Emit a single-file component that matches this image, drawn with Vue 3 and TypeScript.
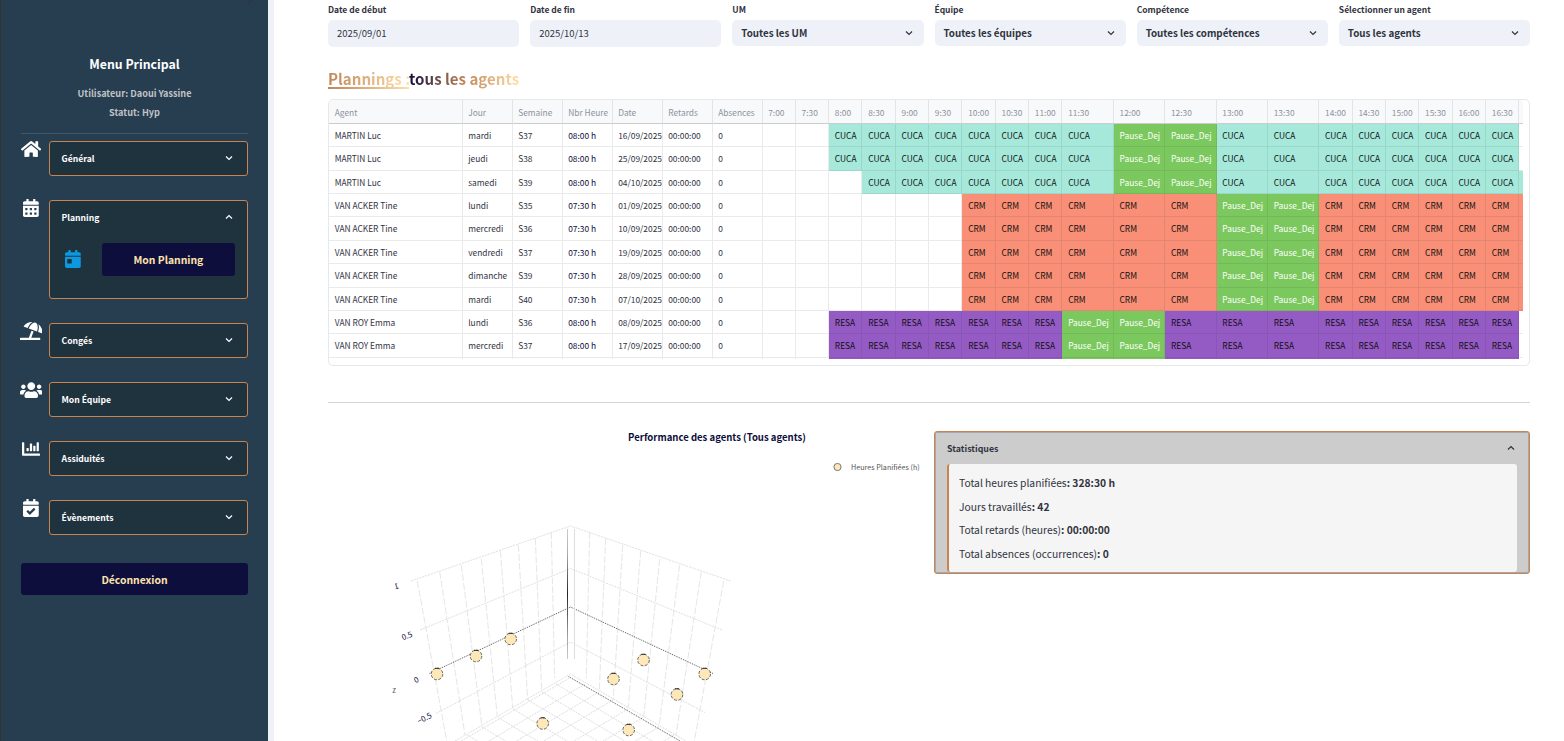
<script setup lang="ts">
interface MenuEntry {
  label: string
  icon: string
  viewBox: string
  open?: boolean
}

interface PlanRow {
  agent: string
  day: string
  week: string
  hours: string
  date: string
  slots: string[]
}

const calendarTop =
  'M436 160H12c-6.6 0-12-5.4-12-12v-36c0-26.5 21.5-48 48-48h48V12c0-6.6 5.4-12 12-12h40c6.6 0 12 5.4 12 12v52h128V12c0-6.6 5.4-12 12-12h40c6.6 0 12 5.4 12 12v52h48c26.5 0 48 21.5 48 48v36c0 6.6-5.4 12-12 12z'
const hole = (x: number, y: number): string =>
  `M${x} ${y + 12}c0-6.6 5.4-12 12-12h40c6.6 0 12 5.4 12 12v40c0 6.6-5.4 12-12 12h-40c-6.6 0-12-5.4-12-12z`
const calendarBody = 'M0 192h448v272c0 26.5-21.5 48-48 48H48c-26.5 0-48-21.5-48-48z'
const calendarGrid =
  calendarTop + calendarBody + [64, 192, 320].map((x) => hole(x, 256) + hole(x, 384)).join('')
const calendarDay = calendarTop + calendarBody + 'M64 272v96c0 8.8 7.2 16 16 16h96c8.8 0 16-7.2 16-16v-96c0-8.8-7.2-16-16-16H80c-8.8 0-16 7.2-16 16z'

const menu: MenuEntry[] = [
  {
    label: 'Général',
    viewBox: '0 0 576 512',
    icon: 'M280.37 148.26L96 300.11V464a16 16 0 0 0 16 16l112.06-.29a16 16 0 0 0 15.92-16V368a16 16 0 0 1 16-16h64a16 16 0 0 1 16 16v95.64a16 16 0 0 0 16 16.05L464 480a16 16 0 0 0 16-16V300L295.67 148.26a12.19 12.19 0 0 0-15.3 0zM571.6 251.47L488 182.56V44.05a12 12 0 0 0-12-12h-56a12 12 0 0 0-12 12v72.61L318.47 43a48 48 0 0 0-61 0L4.34 251.47a12 12 0 0 0-1.6 16.9l25.5 31A12 12 0 0 0 45.15 301l235.22-193.74a12.19 12.19 0 0 1 15.3 0L530.9 301a12 12 0 0 0 16.9-1.6l25.5-31a12 12 0 0 0-1.7-16.93z',
  },
  { label: 'Planning', viewBox: '0 0 448 512', icon: calendarGrid, open: true },
  {
    label: 'Congés',
    viewBox: '0 0 640 512',
    icon: 'M115.38 136.9l102.11 37.18c35.19-81.54 86.21-144.29 139-173.7-95.88-4.89-188.78 36.96-248.53 111.8-6.69 8.4-2.66 21.05 7.42 24.72zm132.25 48.16l238.48 86.83c35.76-121.38 18.7-231.66-42.63-253.98-7.4-2.7-15.13-4-23.09-4-58.02.01-128.27 69.17-172.76 171.15zM521.48 60.5c6.22 16.3 10.83 34.6 13.2 55.19 5.74 49.89-1.42 108.23-18.95 166.98l102.62 37.36c10.09 3.67 21.31-3.43 21.57-14.17 2.32-95.69-41.91-187.44-118.44-245.36zM560 447.98H321.06L386 269.5l-60.14-21.9-72.9 200.37H16c-8.84 0-16 7.16-16 16.01v32.01C0 504.83 7.16 512 16 512h544c8.84 0 16-7.16 16-16.01v-32.01c0-8.84-7.16-16-16-16z',
  },
  {
    label: 'Mon Équipe',
    viewBox: '0 0 640 512',
    icon: 'M96 224c35.3 0 64-28.7 64-64s-28.7-64-64-64-64 28.7-64 64 28.7 64 64 64zm448 0c35.3 0 64-28.7 64-64s-28.7-64-64-64-64 28.7-64 64 28.7 64 64 64zm32 32h-64c-17.6 0-33.5 7.1-45.1 18.6 40.3 22.1 68.9 62 75.1 109.4h66c17.7 0 32-14.3 32-32v-32c0-35.3-28.7-64-64-64zm-256 0c61.9 0 112-50.1 112-112S381.9 32 320 32 208 82.1 208 144s50.1 112 112 112zm76.8 32h-8.3c-20.8 10-43.9 16-68.5 16s-47.6-6-68.5-16h-8.3C179.6 288 128 339.6 128 403.2V432c0 26.5 21.5 48 48 48h288c26.5 0 48-21.5 48-48v-28.8c0-63.6-51.6-115.2-115.2-115.2zm-223.7-13.4C161.5 263.1 145.6 256 128 256H64c-35.3 0-64 28.7-64 64v32c0 17.7 14.3 32 32 32h65.9c6.3-47.4 34.9-87.3 75.2-109.4z',
  },
  {
    label: 'Assiduités',
    viewBox: '0 0 512 512',
    icon: 'M332.8 320h38.4c6.4 0 12.8-6.4 12.8-12.8V172.8c0-6.4-6.4-12.8-12.8-12.8h-38.4c-6.4 0-12.8 6.4-12.8 12.8v134.4c0 6.4 6.4 12.8 12.8 12.8zm96 0h38.4c6.4 0 12.8-6.4 12.8-12.8V76.8c0-6.4-6.4-12.8-12.8-12.8h-38.4c-6.4 0-12.8 6.4-12.8 12.8v230.4c0 6.4 6.4 12.8 12.8 12.8zm-288 0h38.4c6.4 0 12.8-6.4 12.8-12.8v-70.4c0-6.4-6.4-12.8-12.8-12.8h-38.4c-6.4 0-12.8 6.4-12.8 12.8v70.4c0 6.4 6.4 12.8 12.8 12.8zm96 0h38.4c6.4 0 12.8-6.4 12.8-12.8V108.8c0-6.4-6.4-12.8-12.8-12.8h-38.4c-6.4 0-12.8 6.4-12.8 12.8v198.4c0 6.4 6.4 12.8 12.8 12.8zM496 384H64V80c0-8.84-7.16-16-16-16H16C7.16 64 0 71.16 0 80v336c0 17.67 14.33 32 32 32h464c8.84 0 16-7.16 16-16v-32c0-8.84-7.16-16-16-16z',
  },
  {
    label: 'Évènements',
    viewBox: '0 0 448 512',
    icon: calendarTop + 'M12 192h424c6.6 0 12 5.4 12 12v260c0 26.5-21.5 48-48 48H48c-26.5 0-48-21.5-48-48V204c0-6.6 5.4-12 12-12zm333.296 95.947l-28.169-28.398c-4.667-4.705-12.265-4.736-16.97-.068L194.12 364.665l-45.98-46.352c-4.667-4.705-12.266-4.736-16.971-.068l-28.397 28.17c-4.705 4.667-4.736 12.265-.068 16.97l82.601 83.269c4.667 4.705 12.265 4.736 16.97.068l142.953-141.805c4.705-4.667 4.736-12.265.068-16.97z',
  },
]

const filters = [
  { label: 'Date de début', value: '2025/09/01', date: true },
  { label: 'Date de fin', value: '2025/10/13', date: true },
  { label: 'UM', value: 'Toutes les UM' },
  { label: 'Équipe', value: 'Toutes les équipes' },
  { label: 'Compétence', value: 'Toutes les compétences' },
  { label: 'Sélectionner un agent', value: 'Tous les agents' },
]

const headers = [
  'Agent', 'Jour', 'Semaine', 'Nbr Heure', 'Date', 'Retards', 'Absences',
  '7:00', '7:30', '8:00', '8:30', '9:00', '9:30', '10:00', '10:30', '11:00', '11:30', '12:00',
  '12:30', '13:00', '13:30', '14:00', '14:30', '15:00', '15:30', '16:00', '16:30', '',
]

// Half-hour slots from 7:00; the 21st is the partly visible 17:00 column.
function slots(code: string, from: number, pause: number, to: number): string[] {
  return Array.from({ length: 21 }, (_, i) => {
    if (i < from || i >= to) return ''
    return i === pause || i === pause + 1 ? 'Pause_Dej' : code
  })
}

const rows: PlanRow[] = [
  { agent: 'MARTIN Luc', day: 'mardi', week: 'S37', hours: '08:00 h', date: '16/09/2025', slots: slots('CUCA', 2, 10, 20) },
  { agent: 'MARTIN Luc', day: 'jeudi', week: 'S38', hours: '08:00 h', date: '25/09/2025', slots: slots('CUCA', 2, 10, 20) },
  { agent: 'MARTIN Luc', day: 'samedi', week: 'S39', hours: '08:00 h', date: '04/10/2025', slots: slots('CUCA', 3, 10, 21) },
  { agent: 'VAN ACKER Tine', day: 'lundi', week: 'S35', hours: '07:30 h', date: '01/09/2025', slots: slots('CRM', 6, 12, 21) },
  { agent: 'VAN ACKER Tine', day: 'mercredi', week: 'S36', hours: '07:30 h', date: '10/09/2025', slots: slots('CRM', 6, 12, 21) },
  { agent: 'VAN ACKER Tine', day: 'vendredi', week: 'S37', hours: '07:30 h', date: '19/09/2025', slots: slots('CRM', 6, 12, 21) },
  { agent: 'VAN ACKER Tine', day: 'dimanche', week: 'S39', hours: '07:30 h', date: '28/09/2025', slots: slots('CRM', 6, 12, 21) },
  { agent: 'VAN ACKER Tine', day: 'mardi', week: 'S40', hours: '07:30 h', date: '07/10/2025', slots: slots('CRM', 6, 12, 21) },
  { agent: 'VAN ROY Emma', day: 'lundi', week: 'S36', hours: '08:00 h', date: '08/09/2025', slots: slots('RESA', 2, 9, 20) },
  { agent: 'VAN ROY Emma', day: 'mercredi', week: 'S37', hours: '08:00 h', date: '17/09/2025', slots: slots('RESA', 2, 9, 20) },
]

const stats = [
  { label: 'Total heures planifiées', value: '328:30 h' },
  { label: 'Jours travaillés', value: '42' },
  { label: 'Total retards (heures)', value: '00:00:00' },
  { label: 'Total absences (occurrences)', value: '0' },
]

// One wall of the 3D scene; the other is its mirror about x = 570.5.
const wallLines = [
  [417.3, 581, 446.7, 741], [439.7, 571.7, 465, 735], [461.3, 565, 482, 726.7],
  [481.3, 559, 497.3, 716.7], [500.3, 550.7, 512.7, 707.7], [518.3, 545, 527.7, 700],
  [535.3, 538.3, 541.7, 690.7], [551.3, 532.3, 554.7, 678.3],
]
const floorStarts = [[451, 743], [467, 735], [482, 727], [498, 717.5], [513, 709], [528, 700], [542, 692], [556, 684]]
const markers = [
  [437, 674], [476, 656], [510.7, 639], [542.7, 723.5], [643.5, 660],
  [613.5, 679], [677, 694.5], [704.7, 674], [628.7, 730],
]
const mirror = (x: number): number => 1141 - x
</script>

<template>
  <div class="app">
    <aside class="sidebar">
      <svg class="collapse" width="8" height="5" viewBox="0 0 8 5"><path d="M1 4 5 0" /></svg>
      <h2>Menu Principal</h2>
      <p class="who">Utilisateur: Daoui Yassine</p>
      <p class="who">Statut: Hyp</p>
      <hr />
      <nav>
        <div v-for="m in menu" :key="m.label" class="entry">
          <span class="entry-icon">
            <svg :viewBox="m.viewBox" height="18"><path :d="m.icon" fill-rule="evenodd" /></svg>
          </span>
          <div class="box">
            <div class="box-head">
              <span>{{ m.label }}</span>
              <svg class="chev" width="8" height="6" viewBox="0 0 8 6">
                <path :d="m.open ? 'M1 4.5 4 1.5 7 4.5' : 'M1 1.5 4 4.5 7 1.5'" />
              </svg>
            </div>
            <div v-if="m.open" class="box-body">
              <svg class="day" viewBox="0 0 448 512" height="18"><path :d="calendarDay" fill-rule="evenodd" /></svg>
              <button class="btn sub">Mon Planning</button>
            </div>
          </div>
        </div>
      </nav>
      <button class="btn logout">Déconnexion</button>
    </aside>
    <div class="gutter"></div>

    <main>
      <section class="filters">
        <div v-for="f in filters" :key="f.label" class="filter">
          <label>{{ f.label }}</label>
          <div class="field" :class="{ date: f.date }">
            <span>{{ f.value }}</span>
            <svg v-if="!f.date" class="chev" width="8" height="6" viewBox="0 0 8 6"><path d="M1 1.5 4 4.5 7 1.5" /></svg>
          </div>
        </div>
      </section>

      <h1><span class="t1">Plannings :</span><span class="t2">tous les agents</span></h1>

      <section class="frame">
        <div class="grid head">
          <div v-for="(h, i) in headers" :key="i" class="cell">{{ h }}</div>
        </div>
        <div v-for="r in rows" :key="r.agent + r.date" class="grid row">
          <div class="cell">{{ r.agent }}</div>
          <div class="cell">{{ r.day }}</div>
          <div class="cell">{{ r.week }}</div>
          <div class="cell hours">{{ r.hours }}</div>
          <div class="cell">{{ r.date }}</div>
          <div class="cell">00:00:00</div>
          <div class="cell">0</div>
          <div v-for="(s, i) in r.slots" :key="i" class="cell" :class="s ? ['slot', s.toLowerCase()] : ''">{{ i < 20 ? s : '' }}</div>
        </div>
        <div class="grid stub">
          <div v-for="i in 28" :key="i" class="cell" :class="i > 9 && i < 28 ? ['slot', i === 17 || i === 18 ? 'pause_dej' : 'resa'] : ''"></div>
        </div>
      </section>

      <hr class="sep" />

      <section class="bottom">
        <svg class="chart" width="596" height="321" viewBox="328 420 596 321">
          <defs>
            <linearGradient id="pole" x1="0" y1="0" x2="0" y2="1">
              <stop offset="0" stop-color="#ccc" /><stop offset=".2" stop-color="#aaa" />
              <stop offset=".5" stop-color="#222" /><stop offset=".8" stop-color="#999" />
              <stop offset="1" stop-color="#ccc" />
            </linearGradient>
          </defs>
          <text class="c-title" x="717" y="441" text-anchor="middle">Performance des agents (Tous agents)</text>
          <circle class="l-dot" cx="837.5" cy="467" r="3.6" />
          <text class="c-legend" x="851" y="470">Heures Planifiées (h)</text>

          <g class="floor">
            <template v-for="([x, y], i) in floorStarts" :key="i">
              <line :x1="x" :y1="y" :x2="x + 150" :y2="y + 89" />
              <line :x1="mirror(x)" :y1="y" :x2="mirror(x) - 150" :y2="y + 89" />
            </template>
            <path d="M455 741 570.5 674 686 741M456 744 570.5 677.5" />
          </g>
          <g class="wall">
            <template v-for="([a, b, c, d], i) in wallLines" :key="i">
              <line :x1="a" :y1="b" :x2="c" :y2="d" />
              <line :x1="mirror(a)" :y1="b" :x2="mirror(c)" :y2="d" />
            </template>
          </g>
          <g class="level">
            <path d="M411 581 570.5 526 730.5 581" />
            <path d="M420 630 570.5 568.5 722 630" />
            <path d="M436 713.5 570.5 642 705 712.5" />
          </g>
          <path class="axis" d="M429.5 673.5 570.5 607 713 673.5M568.5 676.5 680 741" />
          <rect x="567" y="529" width="1" height="130" fill="url(#pole)" />
          <rect x="574" y="529" width="1" height="130" fill="#ddd" />

          <g v-for="([x, y], i) in markers" :key="i">
            <circle class="dot" :cx="x" :cy="y" r="5.8" />
            <line class="cap" :x1="x - 2" :y1="y - 5.7" :x2="x + 2" :y2="y - 5.7" />
          </g>

          <g class="ticks">
            <text transform="translate(396.5 586.5) rotate(-20) scale(-1 1)" y="2.5">1</text>
            <text transform="translate(407 636) rotate(-22)" y="2.5">0.5</text>
            <text transform="translate(416.5 680) rotate(-25)" y="2.5">0</text>
            <text class="z" x="394" y="693">z</text>
            <text transform="translate(424.5 718.5) rotate(-27)" y="2.5">−0.5</text>
          </g>
        </svg>

        <div class="card">
          <div class="card-head">
            <span>Statistiques</span>
            <svg class="chev" width="8" height="6" viewBox="0 0 8 6"><path d="M1 4.5 4 1.5 7 4.5" /></svg>
          </div>
          <div class="panel">
            <p v-for="s in stats" :key="s.label">{{ s.label }}<b>: {{ s.value }}</b></p>
          </div>
        </div>
      </section>
    </main>
  </div>
</template>

<style>
body {
  background: #fff;
  overflow: hidden;
}
</style>

<style scoped>
* {
  box-sizing: border-box;
}
.app {
  display: flex;
  width: 1564px;
  height: 741px;
  overflow: hidden;
  font-family: 'Noto Sans CJK SC', 'Noto Sans', sans-serif;
  color: #31333f;
  white-space: nowrap;
}
h1, h2, p {
  margin: 0;
}
.sidebar {
  position: relative;
  width: 268px;
  padding: 54px 20px 0;
  border-left: 1px solid #333;
  background: #263e50;
  color: #fff;
}
.collapse {
  position: absolute;
  top: 0;
  right: 13px;
}
.collapse path {
  stroke: #31333f;
  stroke-width: 1.5;
}
.gutter {
  width: 6px;
  background: #eef2f8;
}
h2 {
  height: 21px;
  line-height: 21px;
  font-size: 12.3px;
  text-align: center;
}
.who {
  margin-top: 9px;
  height: 18px;
  line-height: 19px;
  font-size: 9.15px;
  font-weight: 700;
  text-align: center;
  color: #c0c3c7;
}
.who + .who {
  margin-top: 1px;
}
hr {
  height: 1px;
  margin: 12px 0 7px;
  border: 0;
  background: #40566a;
}
nav {
  display: flex;
  flex-direction: column;
  gap: 24px;
}
.entry {
  display: flex;
  gap: 8px;
}
.entry-icon {
  display: flex;
  justify-content: center;
  width: 20px;
  height: 18px;
  margin-top: -0.7px;
}
.entry-icon svg {
  flex: none;
  fill: #fff;
}
.box {
  flex: 1;
  border: 1px solid #c8834f;
  border-radius: 3px;
  background: #1f333f;
}
.box-head {
  display: flex;
  align-items: center;
  justify-content: space-between;
  height: 33px;
  padding: 0 14.5px 2px 11.5px;
  font-size: 8.6px;
  font-weight: 700;
}
.chev {
  flex: none;
}
.chev path {
  fill: none;
  stroke: currentColor;
  stroke-width: 1.2;
}
.box-body {
  display: flex;
  align-items: center;
  height: 64px;
  padding: 0 12px 13px 15px;
}
.day {
  margin: -2px 21px 0 0;
  fill: #0d99e0;
}
.btn {
  padding: 0;
  border: 0;
  border-radius: 3px;
  background: #0e0e3c;
  color: #ffe4ae;
  font-family: inherit;
  font-size: 10.35px;
  font-weight: 700;
}
.sub {
  flex: 1;
  height: 33px;
}
.logout {
  width: 227px;
  height: 32px;
  margin-top: 28px;
}
main {
  width: 1202px;
  margin-left: 54px;
}
.filters {
  display: grid;
  grid-template-columns: repeat(6, 1fr);
  gap: 11px;
  height: 47px;
}
label {
  display: block;
  height: 20px;
  line-height: 19px;
  font-size: 8.5px;
  font-weight: 700;
}
.field {
  display: flex;
  align-items: center;
  justify-content: space-between;
  height: 26px;
  padding: 0 11px 0 9px;
  border-radius: 5px;
  background: #eef2f8;
  font-size: 9.8px;
  font-weight: 700;
}
.field.date {
  height: 27px;
  padding-bottom: 2px;
  font-size: 9.5px;
  font-weight: 400;
}
h1 {
  display: flex;
  height: 21px;
  margin: 21px 0 10px;
  line-height: 20px;
  font-size: 15.1px;
}
.t1,
.t2 {
  background: linear-gradient(90deg, #c08457, #ffe0a8);
  background-clip: text;
  -webkit-background-clip: text;
  color: transparent;
}
.t1 {
  width: 81px;
  border-bottom: 2px solid;
  border-image: linear-gradient(90deg, #c08457, #ffe0a8) 1;
}
.t2 {
  background-image: linear-gradient(90deg, #0e0e3c, #c08457 50%, #ffe0a8);
}
.frame {
  height: 267px;
  border: 1px solid #e6e8eb;
  border-radius: 5px;
  overflow: hidden;
  font-size: 8.4px;
}
.grid {
  display: grid;
  grid-template-columns: 133.5px repeat(6, 50px) repeat(9, 33.34px) repeat(5, 51.4px) repeat(6, 33.34px) 3.5px;
  width: 1194px;
}
.cell {
  padding-left: 5.7px;
  border-right: 1px solid rgba(49, 51, 63, 0.1);
  border-bottom: 1px solid rgba(49, 51, 63, 0.1);
  line-height: 23px;
  overflow: hidden;
}
.grid > .cell:last-child {
  padding-left: 0;
  border-right: 0;
}
.head {
  height: 24px;
  background: #f8f9fb;
  color: #8f929b;
}
.head .cell {
  border-bottom-color: #ccc;
  line-height: 24px;
}
.row {
  height: 23.36px;
}
.stub {
  height: 1.5px;
}
.stub .cell {
  border-bottom: 0;
}
.hours {
  color: #0e0e3c;
}
.slot {
  color: #111;
}
.cuca {
  background: #a6e9db;
}
.crm {
  background: #f88f76;
}
.resa {
  background: #955bc5;
}
.pause_dej {
  background: #7bc95e;
  color: #fff;
}
.sep {
  margin: 36px 0 0;
  background: #d3d4d6;
}
.bottom {
  display: flex;
  gap: 10px;
  margin-top: 17px;
}
.c-title {
  font-size: 9.55px;
  font-weight: 700;
  fill: #0e0e3c;
}
.l-dot {
  fill: #ffe8b8;
  stroke: #777;
}
.c-legend {
  font-size: 7.2px;
  fill: #555;
}
.floor *,
.level * {
  fill: none;
  stroke: #dfdfdf;
  stroke-dasharray: 2 1;
}
.wall line {
  stroke: #e6e6e6;
  stroke-dasharray: 7 2;
}
.axis {
  fill: none;
  stroke: #555;
  stroke-dasharray: 1 1;
}
.dot {
  fill: #ffe8b8;
  stroke: #444;
  stroke-width: 0.8;
  stroke-dasharray: 3 1.5;
}
.cap {
  stroke: #222;
}
.ticks text {
  font-size: 7.8px;
  text-anchor: middle;
  fill: #0e0e3c;
}
.ticks .z {
  fill: #555a70;
}
.card {
  width: 596px;
  height: 143px;
  margin-top: 11px;
  padding: 0 12px 0 11px;
  border: 1px solid #c8834f;
  border-radius: 3px;
  box-shadow: inset 0 0 0 1px #a5a9ae;
  background: #ccc;
}
.card-head {
  display: flex;
  align-items: center;
  justify-content: space-between;
  height: 32px;
  padding: 0 2.5px 0 1px;
  font-size: 8.8px;
  font-weight: 700;
}
.panel {
  height: 108px;
  padding: 7px 0 0 10px;
  margin-left: 1px;
  border-left: 2px solid #c8834f;
  border-radius: 3px;
  background: #f5f5f5;
  font-size: 10.3px;
}
.panel p {
  height: 23.7px;
  line-height: 24.4px;
}
</style>
